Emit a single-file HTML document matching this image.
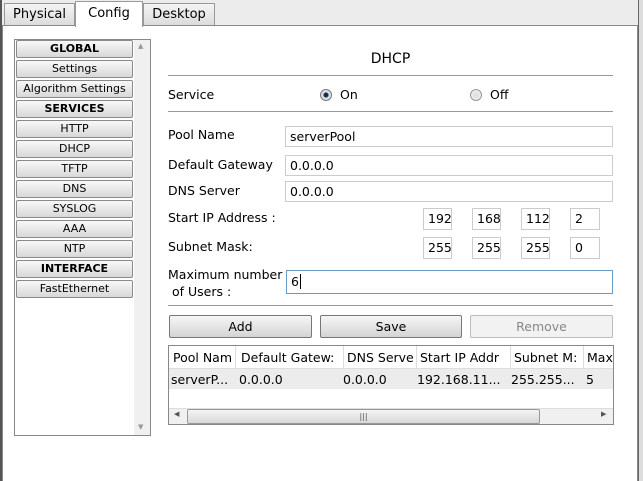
<!DOCTYPE html>
<html><head><style>
*{box-sizing:border-box;margin:0;padding:0}
body{width:643px;height:481px;background:#fff;font-family:"DejaVu Sans","Liberation Sans",sans-serif;font-size:12px;color:#000;position:relative;overflow:hidden}
.a{position:absolute}
.tab{position:absolute;top:3px;height:23px;background:linear-gradient(#f4f4f4,#dcdcdc);border:1px solid #999;font-size:13px;text-align:center;line-height:21px}
.lb{position:absolute;left:16px;width:117px;height:18px;border:1px solid #8a8a8a;border-radius:2px;background:linear-gradient(#f8f8f8,#d8d8d8);font-size:11px;text-align:center;line-height:16px}
.lb.b{font-weight:bold}
.in{position:absolute;border:1px solid #ccc;background:#fff;padding-left:4px;line-height:19px;font-size:12.5px}
.hr{position:absolute;left:168px;width:445px;height:1px;background:#999}
.lab{position:absolute;left:168px;font-size:12.5px}
.btn{position:absolute;top:315px;height:23px;border:1px solid #777;border-radius:2px;background:linear-gradient(#f6f6f6,#d4d4d4);text-align:center;line-height:21px;font-size:12.5px}
</style></head><body>
<div class="a" style="left:0;top:0;width:643px;height:26px;background:#ececec"></div>
<div class="tab" style="left:4px;width:71px">Physical</div>
<div class="tab" style="left:143px;width:72px">Desktop</div>
<div class="a" style="left:2px;top:25px;width:636px;height:456px;border:1px solid #888;border-bottom:none;background:#fff"></div>
<div class="tab" style="left:75px;top:1px;width:68px;height:26px;background:#fff;border-bottom:none;line-height:24px">Config</div>
<div class="a" style="left:0;top:0;width:2px;height:481px;background:#555"></div>
<div class="a" style="left:638px;top:0;width:5px;height:481px;background:#ddd;border-left:1px solid #666"></div>

<div class="a" style="left:14px;top:39px;width:137px;height:397px;border:1px solid #888"></div>
<div class="a" style="left:134px;top:40px;width:16px;height:395px;background:#f0f0f0"></div>
<div class="a" style="left:138px;top:42px;font-size:7px;color:#999">▲</div>
<div class="a" style="left:138px;top:423px;font-size:7px;color:#999">▼</div>
<div class="lb b" style="top:40px">GLOBAL</div>
<div class="lb" style="top:60px">Settings</div>
<div class="lb" style="top:80px">Algorithm Settings</div>
<div class="lb b" style="top:100px">SERVICES</div>
<div class="lb" style="top:120px">HTTP</div>
<div class="lb" style="top:140px">DHCP</div>
<div class="lb" style="top:160px">TFTP</div>
<div class="lb" style="top:180px">DNS</div>
<div class="lb" style="top:200px">SYSLOG</div>
<div class="lb" style="top:220px">AAA</div>
<div class="lb" style="top:240px">NTP</div>
<div class="lb b" style="top:260px">INTERFACE</div>
<div class="lb" style="top:280px">FastEthernet</div>

<div class="a" style="left:168px;width:445px;top:51px;text-align:center;font-size:14px">DHCP</div>
<div class="hr" style="top:75px"></div>
<div class="lab" style="top:87px">Service</div>
<div class="a" style="left:320px;top:89px;width:12px;height:12px;border-radius:50%;border:1px solid #777;background:radial-gradient(circle,#123 0,#234 2px,#cde 3px,#eee 6px)"></div>
<div class="lab" style="left:340px;top:87px">On</div>
<div class="a" style="left:470px;top:89px;width:12px;height:12px;border-radius:50%;border:1px solid #999;background:radial-gradient(circle,#ddd,#f4f4f4)"></div>
<div class="lab" style="left:490px;top:87px">Off</div>
<div class="hr" style="top:111px"></div>

<div class="lab" style="top:127px">Pool Name</div>
<div class="in" style="left:285px;top:126px;width:328px;height:21px">serverPool</div>
<div class="lab" style="top:157px">Default Gateway</div>
<div class="in" style="left:285px;top:155px;width:328px;height:21px">0.0.0.0</div>
<div class="lab" style="top:183px">DNS Server</div>
<div class="in" style="left:285px;top:181px;width:328px;height:21px">0.0.0.0</div>
<div class="lab" style="top:210px">Start IP Address :</div>
<div class="in" style="left:423px;top:208px;width:29px;height:22px">192</div>
<div class="in" style="left:472px;top:208px;width:29px;height:22px">168</div>
<div class="in" style="left:521px;top:208px;width:29px;height:22px">112</div>
<div class="in" style="left:570px;top:208px;width:30px;height:22px">2</div>
<div class="lab" style="top:239px">Subnet Mask:</div>
<div class="in" style="left:423px;top:237px;width:29px;height:22px">255</div>
<div class="in" style="left:472px;top:237px;width:29px;height:22px">255</div>
<div class="in" style="left:521px;top:237px;width:29px;height:22px">255</div>
<div class="in" style="left:570px;top:237px;width:30px;height:22px">0</div>
<div class="lab" style="top:266px;line-height:17px">Maximum number<br>&nbsp;of Users :</div>
<div class="in" style="left:286px;top:270px;width:327px;height:24px;border-color:#6a9ac8;line-height:22px">6<span style="border-left:1px solid #000;margin-left:1px"></span></div>
<div class="hr" style="top:305px"></div>

<div class="btn" style="left:169px;width:143px">Add</div>
<div class="btn" style="left:320px;width:142px">Save</div>
<div class="btn" style="left:470px;width:143px;border-color:#bbb;background:#f2f2f2;color:#888">Remove</div>

<div class="a" style="left:168px;top:345px;width:446px;height:80px;border:1px solid #888;overflow:hidden;font-size:12.5px;white-space:nowrap">
<div class="a" style="left:0;top:0;width:446px;height:23px;background:#fff;border-bottom:1px solid #ddd"></div>
<div class="a" style="left:4px;top:4px">Pool Nam</div>
<div class="a" style="left:66px;top:0;width:1px;height:23px;background:#ddd"></div>
<div class="a" style="left:72px;top:4px">Default Gatew:</div>
<div class="a" style="left:174px;top:0;width:1px;height:23px;background:#ddd"></div>
<div class="a" style="left:178px;top:4px">DNS Serve</div>
<div class="a" style="left:247px;top:0;width:1px;height:23px;background:#ddd"></div>
<div class="a" style="left:251px;top:4px">Start IP Addr</div>
<div class="a" style="left:341px;top:0;width:1px;height:23px;background:#ddd"></div>
<div class="a" style="left:345px;top:4px">Subnet M:</div>
<div class="a" style="left:414px;top:0;width:1px;height:23px;background:#ddd"></div>
<div class="a" style="left:418px;top:4px">Max</div>
<div class="a" style="left:0;top:23px;width:446px;height:20px;background:#ececec"></div>
<div class="a" style="left:2px;top:26px">serverP...</div>
<div class="a" style="left:70px;top:26px">0.0.0.0</div>
<div class="a" style="left:174px;top:26px">0.0.0.0</div>
<div class="a" style="left:248px;top:26px">192.168.11...</div>
<div class="a" style="left:342px;top:26px">255.255...</div>
<div class="a" style="left:417px;top:26px">5</div>
<div class="a" style="left:0;top:62px;width:446px;height:17px;background:#f0f0f0;border-top:1px solid #ddd"></div>
<div class="a" style="left:18px;top:63px;width:353px;height:15px;border:1px solid #999;border-radius:2px;background:linear-gradient(#f4f4f4,#d8d8d8);text-align:center;font-size:8px;line-height:13px;color:#555">|||</div>
<div class="a" style="left:5px;top:64px;font-size:7px;color:#555">◀</div>
<div class="a" style="left:432px;top:64px;font-size:7px;color:#555">▶</div>
</div>
</body></html>
